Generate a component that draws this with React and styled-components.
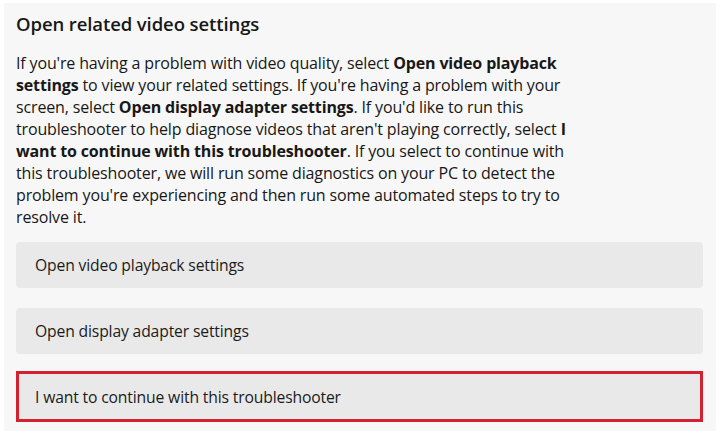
import React from 'react';
import styled, { createGlobalStyle, css } from 'styled-components';

const GlobalStyle = createGlobalStyle`
  html, body {
    margin: 0;
    padding: 0;
    background: #ffffff;
  }
  body {
    font-family: "Open Sans", "Noto Sans", "Liberation Sans", sans-serif;
    color: #181818;
  }
`;

const Panel = styled.section`
  box-sizing: border-box;
  margin: 3px 4px 0 4px;
  height: 428px;
  background: #f7f7f7;
  padding: 8px 13px 0 12px;
  display: flex;
  flex-direction: column;
`;

const Title = styled.h2`
  margin: 0;
  font-size: 18.5px;
  font-weight: 600;
  line-height: 26px;
  letter-spacing: -0.1px;
`;

const Description = styled.p`
  margin: 15px 0 0;
  width: 556px;
  font-size: 16px;
  line-height: 22px;
  letter-spacing: -0.15px;

  strong {
    font-weight: 700;
  }
`;

const Actions = styled.div`
  margin-top: 14px;
  display: flex;
  flex-direction: column;
  gap: 20px;
`;

const ActionButton = styled.button`
  box-sizing: border-box;
  display: flex;
  align-items: center;
  height: 46px;
  padding: 0 19px;
  border: none;
  border-radius: 4px;
  background: #e9e9e9;
  font-family: inherit;
  font-size: 15.7px;
  color: #1b1b1b;
  text-align: left;
  letter-spacing: -0.15px;
  cursor: pointer;

  ${({ highlighted }) =>
    highlighted &&
    css`
      height: 51px;
      margin-top: -3px;
      padding-left: 16px;
      border: 3px solid #d3212f;
      border-radius: 0;
    `}
`;

const App = () => (
  <>
    <GlobalStyle />
    <Panel>
      <Title>Open related video settings</Title>
      <Description>
        If you're having a problem with video quality, select <strong>Open video playback settings</strong> to
        view your related settings. If you're having a problem with your screen, select{' '}
        <strong>Open display adapter settings</strong>. If you'd like to run this troubleshooter to help
        diagnose videos that aren't playing correctly, select{' '}
        <strong>I want to continue with this troubleshooter</strong>. If you select to continue with this
        troubleshooter, we will run some diagnostics on your PC to detect the problem you're experiencing and
        then run some automated steps to try to resolve it.
      </Description>
      <Actions>
        <ActionButton>Open video playback settings</ActionButton>
        <ActionButton>Open display adapter settings</ActionButton>
        <ActionButton highlighted>I want to continue with this troubleshooter</ActionButton>
      </Actions>
    </Panel>
  </>
);

export default App;
